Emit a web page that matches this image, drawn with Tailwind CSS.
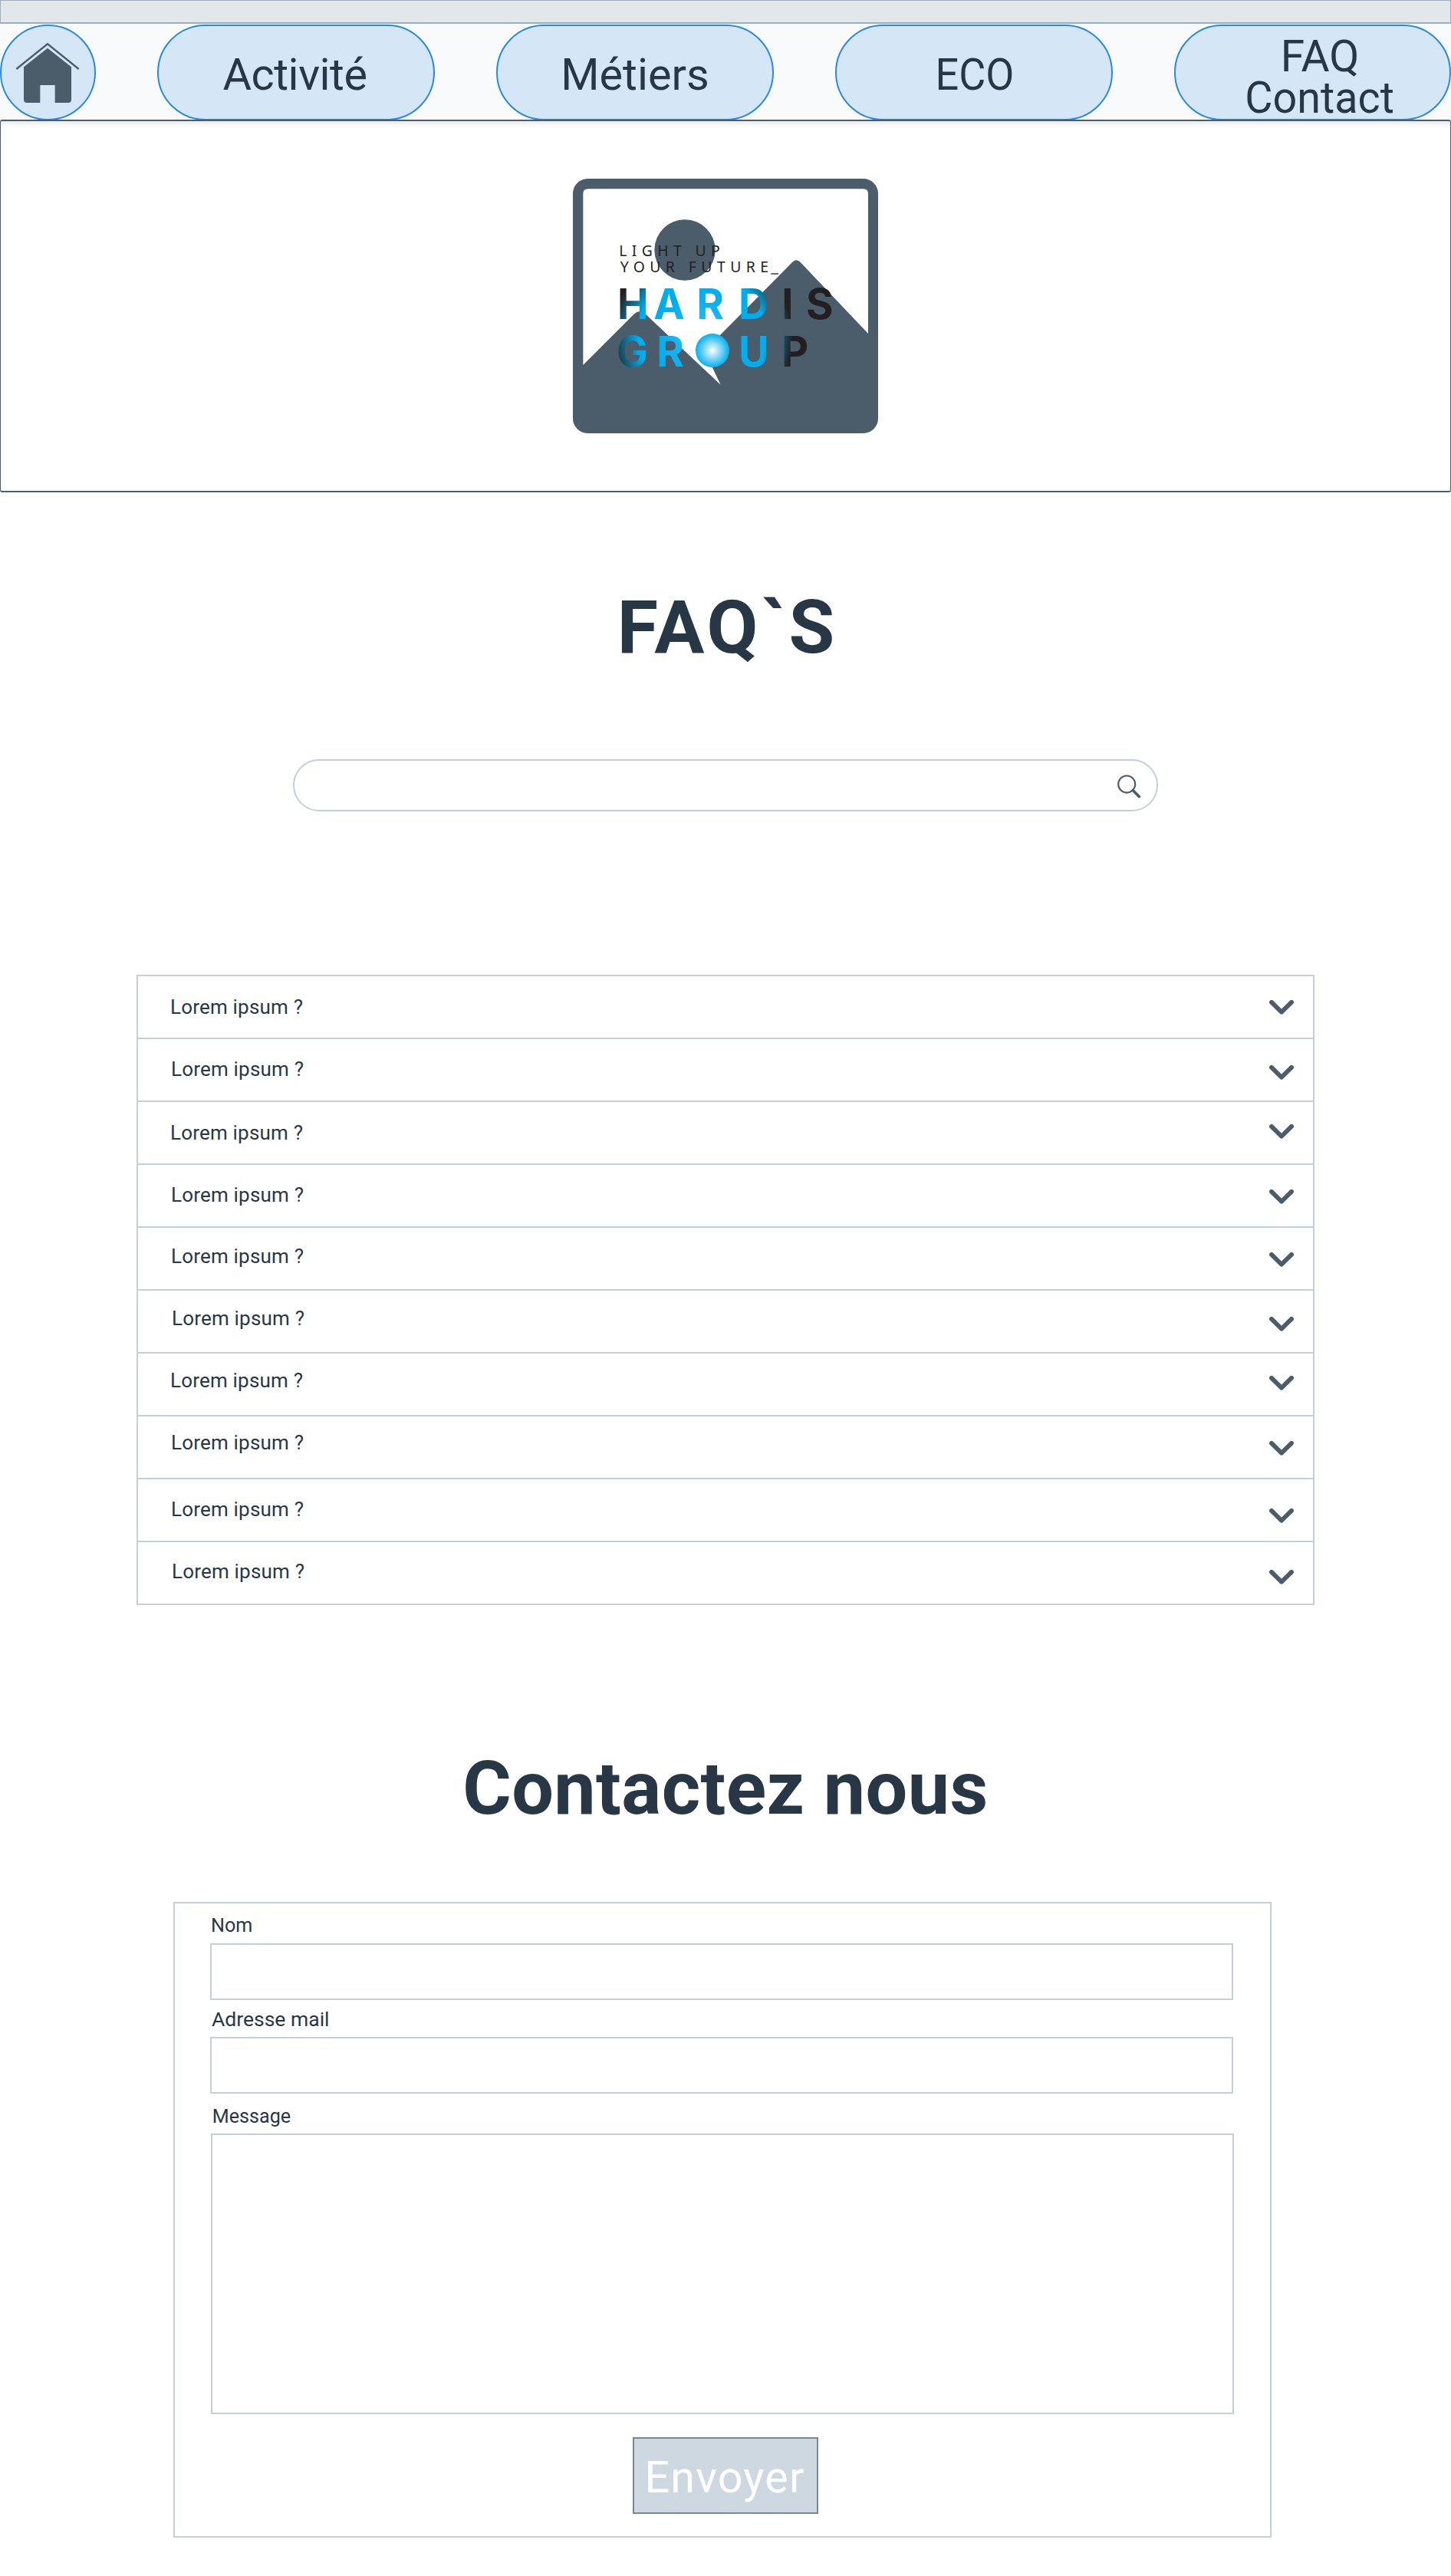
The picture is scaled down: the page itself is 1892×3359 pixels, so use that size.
<!DOCTYPE html>
<html lang="fr">
<head>
<meta charset="utf-8">
<title>Hardis Group – FAQ</title>
<script src="https://cdn.jsdelivr.net/npm/@tailwindcss/browser@4"></script>
</head>
<body class="min-h-[3359px] overflow-x-hidden bg-white font-[Roboto,sans-serif] text-[#273746]">
<svg class="hidden">
  <symbol id="chevron" viewBox="0 0 32 19"><path d="M3 2.9 16 15.8 29 2.9" fill="none" stroke="#4b5d6b" stroke-width="5.8" stroke-linecap="round" stroke-linejoin="round"/></symbol>
</svg>

<div class="h-[31px] border border-b-2 border-[#9dafbd] bg-[#e2e7eb]"></div>

<header class="h-[125px] bg-[#f8fafc] pt-px">
  <nav class="flex gap-20 text-[57.6px] leading-[54px]">
    <a class="flex size-[125px] shrink-0 items-center justify-center rounded-full border-2 border-[#2b8ade] bg-[#d5e6f6] pr-px">
      <svg class="h-20 w-[84px]" viewBox="60 105 252 240">
        <path d="M64 210 186 112 308 210" fill="none" stroke="#4b5d6b" stroke-width="7"/>
        <path d="M186 128 279 202V330Q279 342 267 342H215V273H157V342H105Q93 342 93 330V202Z" fill="#4b5d6b"/>
      </svg>
    </a>
    <a class="flex h-[125px] w-[362px] shrink-0 items-center justify-center rounded-full border-2 border-[#2b8ade] bg-[#d5e6f6] pt-[6px] pr-[3px] tracking-[-0.47px]">Activité</a>
    <a class="flex h-[125px] w-[362px] shrink-0 items-center justify-center rounded-full border-2 border-[#2b8ade] bg-[#d5e6f6] pt-[6px]">Métiers</a>
    <a class="flex h-[125px] w-[362px] shrink-0 items-center justify-center rounded-full border-2 border-[#2b8ade] bg-[#d5e6f6] pt-[6px] pl-[2px]"><span class="scale-x-[.937]">ECO</span></a>
    <a class="flex h-[125px] w-[361px] shrink-0 flex-col items-center justify-center rounded-full border-2 border-[#2b8ade] bg-[#d5e6f6] pt-[12px] pl-[19px]"><span class="scale-x-[.987]">FAQ</span><span class="scale-x-[.967]">Contact</span></a>
  </nav>
</header>

<section class="relative flex h-[486px] justify-center rounded-[3px] border-x border-y-2 border-[#4b5d6b] bg-white pt-[75px] inset-shadow-[0_6px_8px_-4px_rgba(0,0,0,0.12)]">
  <svg class="h-[332px] w-[398px]" viewBox="51 39 1194 996">
    <defs>
      <radialGradient id="ink" gradientUnits="userSpaceOnUse" cx="555" cy="660" r="355">
        <stop offset="0" stop-color="#38c1f6"/><stop offset=".35" stop-color="#10b2f2"/><stop offset=".5" stop-color="#00aeef"/><stop offset=".7" stop-color="#00aeef"/><stop offset="1" stop-color="#231f20"/>
      </radialGradient>
      <radialGradient id="orb"><stop offset="0" stop-color="#fff"/><stop offset=".5" stop-color="#7fd7f8"/><stop offset=".95" stop-color="#0fb3f1"/><stop offset="1" stop-color="#00aeef"/></radialGradient>
    </defs>
    <rect x="51" y="39" width="1194" height="996" rx="58" fill="#4b5d6b"/>
    <path d="M91 768V98Q91 79 111 79H1187Q1206 79 1206 98V645L941 366Q925 350 909 366L586 692L596 776L629 845L330 564Q312 550 292 567Z" fill="#fff"/>
    <circle cx="489" cy="318" r="119" fill="#4b5d6b"/>
    <g class="font-['Noto_Sans',sans-serif]" font-size="58" fill="#231f20">
      <text x="232" y="342" textLength="394" lengthAdjust="spacing">LIGHT UP</text>
      <text x="236" y="405" textLength="580" lengthAdjust="spacing">YOUR FUTURE</text>
    </g>
    <path d="M826 411H855" stroke="#231f20" stroke-width="4"/>
    <g class="font-[Inter,sans-serif] font-bold" font-size="163" fill="url(#ink)">
      <text x="225 367 535 699 868 963" y="587">HARDIS</text>
      <text x="222 379" y="774">GR</text>
      <text x="699 867" y="774">UP</text>
    </g>
    <circle cx="597" cy="711" r="66" fill="url(#orb)"/>
  </svg>
</section>

<main class="flex flex-col">
  <h1 class="mt-[126px] pl-[5px] text-center text-[97px] leading-[100px] font-bold tracking-[3.97px]">FAQ`S</h1>

  <div class="mt-[122px] ml-[382px] flex h-[68px] w-[1128px] items-center justify-end rounded-full border-2 border-[#c3cfda] pt-[2px] pr-5">
    <svg class="size-[31px]" viewBox="50 89 94 92" fill="none" stroke="#4b5d6b"><circle cx="87" cy="126" r="33.5" stroke-width="6.5"/><path d="M112 151 136 175" stroke-width="11" stroke-linecap="round"/></svg>
  </div>

  <ul class="mt-[213px] ml-[178px] w-[1536px] border-2 border-b-0 border-[#c3cfda] text-[26px] leading-[30px] tracking-[0.19px]">
    <li class="flex h-[82px] items-start justify-between border-b-2 border-[#c3cfda] pr-[25px] pl-[42px]"><span class="pt-[25px]">Lorem ipsum ?</span><svg class="mt-[31px] h-[19px] w-8"><use href="#chevron"/></svg></li>
    <li class="flex h-[82px] items-start justify-between border-b-2 border-[#c3cfda] pr-[25px] pl-[43px]"><span class="pt-[24px]">Lorem ipsum ?</span><svg class="mt-[34px] h-[19px] w-8"><use href="#chevron"/></svg></li>
    <li class="flex h-[82px] items-start justify-between border-b-2 border-[#c3cfda] pr-[25px] pl-[42px]"><span class="pt-[25px]">Lorem ipsum ?</span><svg class="mt-[29px] h-[19px] w-8"><use href="#chevron"/></svg></li>
    <li class="flex h-[82px] items-start justify-between border-b-2 border-[#c3cfda] pr-[25px] pl-[43px]"><span class="pt-[24px]">Lorem ipsum ?</span><svg class="mt-[32px] h-[19px] w-8"><use href="#chevron"/></svg></li>
    <li class="flex h-[82px] items-start justify-between border-b-2 border-[#c3cfda] pr-[25px] pl-[43px]"><span class="pt-[22px]">Lorem ipsum ?</span><svg class="mt-[32px] h-[19px] w-8"><use href="#chevron"/></svg></li>
    <li class="flex h-[82px] items-start justify-between border-b-2 border-[#c3cfda] pr-[25px] pl-[44px]"><span class="pt-[21px]">Lorem ipsum ?</span><svg class="mt-[34px] h-[19px] w-8"><use href="#chevron"/></svg></li>
    <li class="flex h-[82px] items-start justify-between border-b-2 border-[#c3cfda] pr-[25px] pl-[42px]"><span class="pt-[20px]">Lorem ipsum ?</span><svg class="mt-[29px] h-[19px] w-8"><use href="#chevron"/></svg></li>
    <li class="flex h-[82px] items-start justify-between border-b-2 border-[#c3cfda] pr-[25px] pl-[43px]"><span class="pt-[19px]">Lorem ipsum ?</span><svg class="mt-[32px] h-[19px] w-8"><use href="#chevron"/></svg></li>
    <li class="flex h-[82px] items-start justify-between border-b-2 border-[#c3cfda] pr-[25px] pl-[43px]"><span class="pt-[24px]">Lorem ipsum ?</span><svg class="mt-[38px] h-[19px] w-8"><use href="#chevron"/></svg></li>
    <li class="flex h-[82px] items-start justify-between border-b-2 border-[#c3cfda] pr-[25px] pl-[44px]"><span class="pt-[23px]">Lorem ipsum ?</span><svg class="mt-[36px] h-[19px] w-8"><use href="#chevron"/></svg></li>
  </ul>

  <h2 class="mt-[189px] text-center text-[97px] leading-[100px] font-bold tracking-[0.39px]">Contactez nous</h2>

  <form class="mt-[98px] ml-[226px] flex h-[829px] w-[1432px] flex-col items-start border-2 border-[#c3cfda] pl-[46px] text-[26.5px] leading-[30px]">
    <label class="mt-[13px] origin-left scale-x-[.95] pl-px">Nom</label>
    <div class="mt-[9px] h-[74px] w-[1334px] border-2 border-[#c3cfda]"></div>
    <label class="mt-[10px] pl-[2px]">Adresse mail</label>
    <div class="mt-[8px] h-[74px] w-[1334px] border-2 border-[#c3cfda]"></div>
    <label class="mt-[14px] origin-left scale-x-[.948] pl-[3px]">Message</label>
    <div class="mt-[8px] ml-px h-[366px] w-[1334px] border-2 border-[#c3cfda]"></div>
    <button type="button" class="mt-[30px] ml-[551px] flex h-[100px] w-[242px] items-center justify-center border-2 border-[#768899] bg-[#cdd8e0] pt-[5px] pr-[2px] text-[57.6px] leading-[60px] tracking-[1.1px] text-white">Envoyer</button>
  </form>
</main>
</body>
</html>
